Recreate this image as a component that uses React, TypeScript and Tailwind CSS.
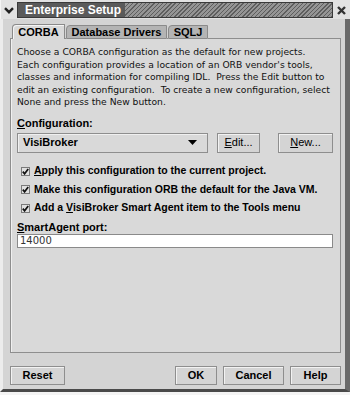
import React from "react";

const font = "font-['Liberation_Sans',Arial,sans-serif]";
const body = "font-['DejaVu_Sans',Verdana,sans-serif]";

const Btn = ({ children, className = "" }: { children: React.ReactNode; className?: string }) => (
  <button
    className={`h-[19px] border border-[#8e8e8e] bg-[#d4d4d4] shadow-[inset_1px_1px_0_#f2f2f2] text-[11px] font-bold text-black ${className}`}
  >
    {children}
  </button>
);

const Check = ({ children }: { children: React.ReactNode }) => (
  <div className="flex items-center h-[18.5px]">
    <span className="w-[9px] h-[9px] border border-[#7a7a7a] bg-[#e0e0e0] flex items-center justify-center">
      <svg width="7" height="7" viewBox="0 0 7 7">
        <path d="M0.8 3.6 L2.6 5.8 L6.2 1" stroke="#111" strokeWidth="1.7" fill="none" />
      </svg>
    </span>
    <span className="ml-[4px] text-[10.5px] font-bold text-black whitespace-nowrap">{children}</span>
  </div>
);

export default function App() {
  return (
    <div className={`w-[350px] h-[395px] bg-[#d4d4d4] flex flex-col ${font}`}>
      {/* title bar */}
      <div className="h-[19px] flex items-stretch bg-[#e2e2e2] pt-[2px] pb-[1px] border-l-[1px] border-l-[#f4f4f4]">
        <div className="w-[16px] flex items-center justify-center">
          <svg width="10" height="7" viewBox="0 0 10 7">
            <path d="M1 1.2 L5 5.2 L9 1.2" stroke="#222" strokeWidth="2.4" fill="none" />
          </svg>
        </div>
        <div className="flex-1 flex border border-[#3a3a3a] bg-[repeating-linear-gradient(135deg,#5e5e5e_0px,#5e5e5e_1px,#959595_1px,#959595_3px)]">
          <span className="bg-[#5a5a5a] text-white text-[12px] font-bold pl-[7px] pr-[4px] leading-[14px]">Enterprise Setup</span>
        </div>
        <div className="w-[17px] flex items-center justify-center">
          <svg width="9" height="9" viewBox="0 0 9 9">
            <path d="M1 1 L8 8 M8 1 L1 8" stroke="#333" strokeWidth="2.4" />
          </svg>
        </div>
      </div>

      <div className="flex-1 flex flex-col border-l-[3px] border-r-[5px] border-b-[3px] border-l-[#ececec] border-r-[#6a6a6a] border-b-[#4a4a4a] pl-[7px] pr-[4px] pt-[5px]">
        {/* tabs */}
        <div className="flex items-end h-[15px]">
          <div className="w-[2px] h-full border-b border-[#8e8e8e]" />
          <div className="h-[15px] w-[53px] text-center border border-b-0 border-[#8a8a8a] bg-[#d9d9d9] shadow-[inset_1px_1px_0_#f4f4f4] text-[11px] font-bold leading-[14px] rounded-tl-[4px]">CORBA</div>
          <div className="w-[1px] h-full border-b border-[#8e8e8e]" />
          <div className="h-[14px] w-[101px] text-center border border-[#8a8a8a] bg-[#b4b4b4] text-[11px] font-bold leading-[12px] rounded-tl-[4px]">Database Drivers</div>
          <div className="w-[1px] h-full border-b border-[#8e8e8e]" />
          <div className="h-[14px] w-[40px] text-center border border-[#8a8a8a] bg-[#b4b4b4] text-[11px] font-bold leading-[12px] rounded-tl-[4px]">SQLJ</div>
          <div className="flex-1 h-full border-b border-[#8e8e8e]" />
        </div>

        {/* panel */}
        <div className="h-[314px] border border-t-0 border-[#8e8e8e] bg-[#d9d9d9] shadow-[inset_1px_0_0_#f0f0f0] pl-[6px] pt-[7px] flex flex-col">
          <p className={`${body} text-[9.2px] leading-[12.5px] text-[#111] whitespace-nowrap`}>
            Choose a CORBA configuration as the default for new projects.<br />
            Each configuration provides a location of an ORB vendor's tools,<br />
            classes and information for compiling IDL.&nbsp; Press the Edit button to<br />
            edit an existing configuration.&nbsp; To create a new configuration, select<br />
            None and press the New button.
          </p>
          <div className="mt-[8.5px] text-[11px] font-bold leading-[13px]"><u>C</u>onfiguration:</div>
          <div className="mt-[2.5px] flex h-[20px]">
            <div className="w-[191px] border border-[#8e8e8e] bg-[#d9d9d9] shadow-[inset_1px_1px_0_#f0f0f0] flex items-center justify-between pl-[5px] pr-[10px]">
              <span className="text-[11px] font-bold">VisiBroker</span>
              <svg width="9" height="5" viewBox="0 0 9 5"><path d="M0 0 L9 0 L4.5 5 Z" fill="#000" /></svg>
            </div>
            <Btn className="ml-[9px] w-[43px] h-[20px] font-normal text-[10.5px]"><u>E</u>dit...</Btn>
            <Btn className="ml-[18px] w-[55px] h-[20px] font-normal text-[10.5px]"><u>N</u>ew...</Btn>
          </div>
          <div className="mt-[9.5px] pl-[4px] flex flex-col">
            <Check><u>A</u>pply this configuration to the current project.</Check>
            <Check>Make this configuration ORB the default for the Java VM.</Check>
            <Check>Add a <u>V</u>isiBroker Smart Agent item to the Tools menu</Check>
          </div>
          <div className="mt-[3px] text-[11px] font-bold leading-[13px]"><u>S</u>martAgent port:</div>
          <div className={`h-[14px] w-[316px] border border-[#8a8a8a] bg-white ${body} text-[10px] leading-[12px] px-[2px] text-[#333]`}>14000</div>
        </div>

        {/* buttons */}
        <div className="flex items-center mt-[13px]">
          <Btn className="w-[55px]">Reset</Btn>
          <div className="flex-1" />
          <Btn className="w-[42px] border-[#6a6a6a]">OK</Btn>
          <Btn className="w-[61px] ml-[6px]">Cancel</Btn>
          <Btn className="w-[51px] ml-[6px]">Help</Btn>
        </div>
      </div>
      <div className="h-[3px] bg-[#f4f4f4]" />
    </div>
  );
}
